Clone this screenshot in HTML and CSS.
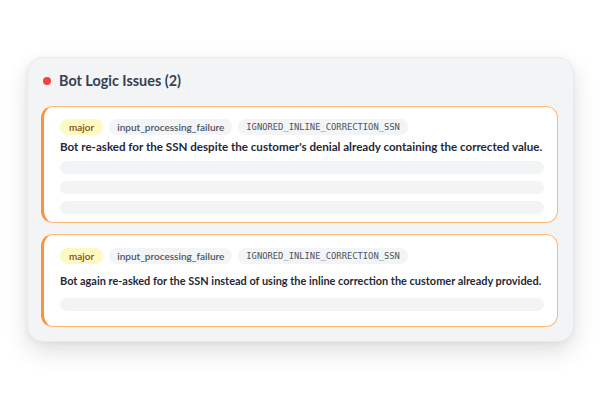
FILE: index.html
```html
<!DOCTYPE html>
<html>
<head>
<meta charset="utf-8">
<link rel="stylesheet" href="styles.css">
</head>
<body>
<div class="stage">
  <section class="panel">
    <header class="panel-head">
      <span class="dot"></span>
      <h2 class="title">Bot Logic Issues (2)</h2>
    </header>
    <div class="issue issue-a">
      <div class="tags">
        <span class="tag tag-sev">major</span>
        <span class="tag tag-cat">input_processing_failure</span>
        <span class="tag tag-code">IGNORED_INLINE_CORRECTION_SSN</span>
      </div>
      <p class="desc">Bot re-asked for the SSN despite the customer's denial already containing the corrected value.</p>
      <div class="bars">
        <div class="bar"></div>
        <div class="bar"></div>
        <div class="bar"></div>
      </div>
    </div>
    <div class="issue issue-b">
      <div class="tags">
        <span class="tag tag-sev">major</span>
        <span class="tag tag-cat">input_processing_failure</span>
        <span class="tag tag-code">IGNORED_INLINE_CORRECTION_SSN</span>
      </div>
      <p class="desc">Bot again re-asked for the SSN instead of using the inline correction the customer already provided.</p>
      <div class="bars">
        <div class="bar"></div>
      </div>
    </div>
  </section>
</div>
</body>
</html>
```
FILE: styles.css
```css
html, body {
  margin: 0;
  padding: 0;
  background: #ffffff;
  font-family: "Lato", "Noto Sans", sans-serif;
}
.stage {
  width: 600px;
  height: 400px;
  box-sizing: border-box;
  padding: 57px 26px 0 27px;
}
.panel {
  box-sizing: border-box;
  width: 547px;
  height: 285px;
  background: #f3f4f6;
  border: 1px solid #e8eaee;
  border-radius: 16px;
  box-shadow: 0 10px 24px rgba(0, 0, 0, 0.12), 0 2px 6px rgba(0, 0, 0, 0.05);
  padding: 12px 15px 0 13px;
  display: flex;
  flex-direction: column;
}
.panel-head {
  display: flex;
  align-items: center;
  gap: 8px;
  height: 22px;
  margin-left: 2px;
  margin-bottom: 14px;
}
.dot {
  width: 8px;
  height: 8px;
  border-radius: 50%;
  background: #ef4444;
}
.title {
  margin: 0;
  font-size: 14.4px;
  font-weight: 700;
  color: #374151;
  line-height: 22px;
}
.issue {
  background: #ffffff;
  border: 1px solid #fdba74;
  border-left: 3px solid #fb923c;
  border-radius: 12px;
  padding: 12px 13px 8px 16px;
}
.issue + .issue {
  margin-top: 11px;
}
.issue-b {
  padding-top: 13px;
  padding-bottom: 15px;
}
.tags {
  display: flex;
  gap: 6px;
  align-items: center;
}
.tag {
  height: 16px;
  line-height: 16px;
  padding: 0 8px;
  border-radius: 8px;
  font-size: 10px;
  font-weight: 600;
  background: #f3f4f6;
  color: #4b5563;
}
.tag-sev {
  padding: 0 9px;
  background: #fef9c3;
  color: #854d0e;
}
.tag-code {
  font-family: "DejaVu Sans Mono", monospace;
  font-size: 8.8px;
  font-weight: 400;
}
.desc {
  margin: 4px 0 0 0;
  font-size: 11.6px;
  font-weight: 700;
  line-height: 16px;
  color: #1f2937;
  white-space: nowrap;
}
.issue-b .desc {
  margin-top: 9px;
  font-size: 10.95px;
}
.bars {
  margin-top: 6px;
  display: flex;
  flex-direction: column;
  gap: 7px;
}
.issue-b .bars {
  margin-top: 9px;
}
.bar {
  height: 13px;
  border-radius: 7px;
  background: #f3f4f6;
}
```
